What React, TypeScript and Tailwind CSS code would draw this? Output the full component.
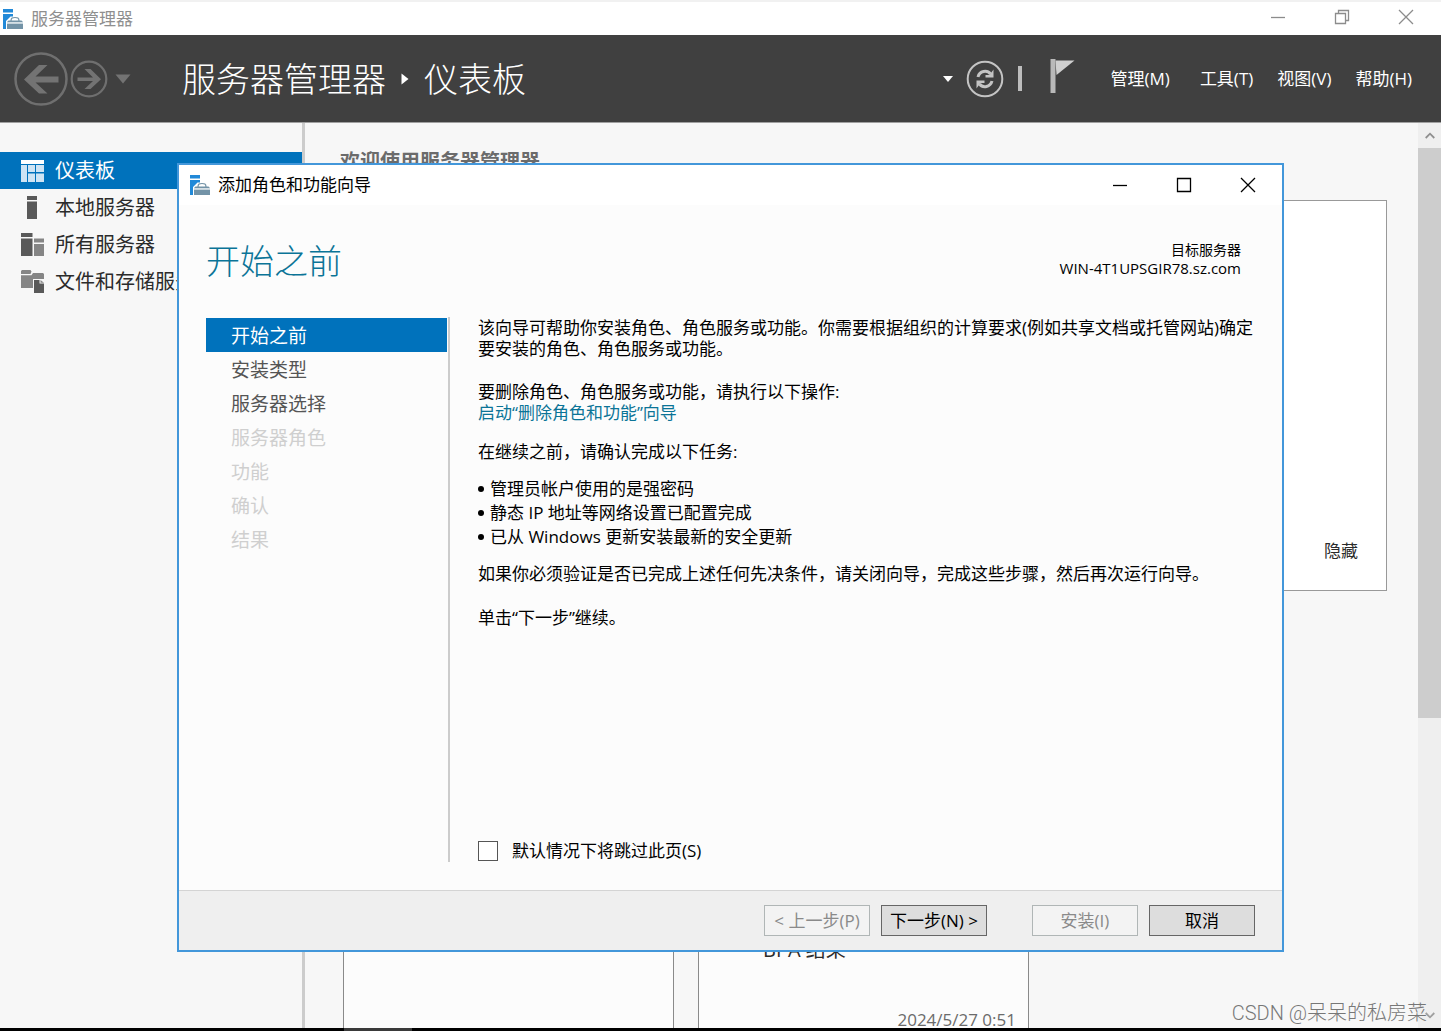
import { ReactNode } from "react";
import clsx from "clsx";

const sidebarItems = [
  { label: "仪表板", icon: <DashboardIcon />, active: true },
  { label: "本地服务器", icon: <ServerIcon />, active: false },
  { label: "所有服务器", icon: <ServersIcon />, active: false },
  { label: "文件和存储服务", icon: <StorageIcon />, active: false },
];

const wizardSteps = [
  { label: "开始之前", state: "current" },
  { label: "安装类型", state: "enabled" },
  { label: "服务器选择", state: "enabled" },
  { label: "服务器角色", state: "disabled" },
  { label: "功能", state: "disabled" },
  { label: "确认", state: "disabled" },
  { label: "结果", state: "disabled" },
];

const stepClasses: Record<string, string> = {
  current: "bg-[#0072bc] text-white",
  enabled: "text-[#555555]",
  disabled: "text-[#cfcfcf]",
};

const tasks = [
  "管理员帐户使用的是强密码",
  "静态 IP 地址等网络设置已配置完成",
  "已从 Windows 更新安装最新的安全更新",
];

const App = () => (
  <div className="relative flex h-screen flex-col overflow-hidden bg-[#f7f7f7] font-['Open_Sans','Noto_Sans_CJK_SC',sans-serif] text-[17px] leading-[22px] text-black">
    <TitleBar />
    <Header />
    <div className="flex min-h-0 flex-1">
      <Sidebar />
      <Dashboard />
      <ScrollBar />
    </div>
    <div className="flex h-[3px] shrink-0 bg-black pl-[344px]">
      <div className="w-17 bg-[#3a3a3a]" />
    </div>
    <Wizard />
    <div className="absolute right-[14px] bottom-1 font-['Roboto','Noto_Sans_CJK_SC',sans-serif] text-[20px] leading-7 font-light text-[#777777]">
      CSDN @呆呆的私房菜
    </div>
  </div>
);

export default App;

const TitleBar = () => (
  <div className="flex h-[35px] shrink-0 items-center border-t-2 border-[#f1f1f1] bg-white pl-[3px] text-[#8f8f8f]">
    <AppLogo />
    <span className="ml-2 flex-1">服务器管理器</span>
    <div className="flex pr-[1px] pb-1 text-[#8c8c8c]">
      <WindowButton label="最小化">
        <path d="M1 8.500h14" />
      </WindowButton>
      <WindowButton label="还原">
        <path d="M1.500 4.500h10v10h-10zM4.500 4.500v-3h10v10h-3" />
      </WindowButton>
      <WindowButton label="关闭">
        <path d="M1 1l14 14M15 1L1 15" />
      </WindowButton>
    </div>
  </div>
);

const WindowButton = ({
  label,
  children,
}: {
  label: string;
  children: ReactNode;
}) => (
  <button
    type="button"
    aria-label={label}
    className="flex h-8 w-16 items-center justify-center pr-1"
  >
    <svg
      className="size-4"
      viewBox="0 0 16 16"
      fill="none"
      stroke="currentColor"
      strokeWidth="1.3"
    >
      {children}
    </svg>
  </button>
);

const Header = () => (
  <header className="flex h-[88px] shrink-0 items-center border-b border-[#a0a0a0] bg-[#404040] pl-[14px] text-white">
    <button type="button" aria-label="后退">
      <svg className="size-[54px]" viewBox="0 0 54 54" fill="none">
        <circle cx="27" cy="27" r="25.500" stroke="#6f6f6f" strokeWidth="2.500" />
        <path
          d="M10 27.500L25 13h8.500L21.500 24.500H44.500v6H21.500L33.500 41.500H25z"
          fill="#737373"
        />
      </svg>
    </button>
    <button type="button" aria-label="前进" className="ml-[2px]">
      <svg className="size-[38px]" viewBox="0 0 38 38" fill="none">
        <circle cx="19" cy="19" r="17.300" stroke="#6f6f6f" strokeWidth="2.200" />
        <path
          d="M31 19.200L20.500 29h-6L23 21H7.500v-3.600H23L14.500 9h6z"
          fill="#737373"
        />
      </svg>
    </button>
    <button type="button" aria-label="历史记录" className="ml-[7px]">
      <svg className="h-[10px] w-4" viewBox="0 0 16 10">
        <path d="M.5.500h15L8 9.500z" fill="#737373" />
      </svg>
    </button>
    <h1 className="ml-[51px] flex flex-1 items-center text-[34px] leading-[48px] font-light">
      服务器管理器
      <svg className="mx-[15px] h-3 w-2" viewBox="0 0 8 12">
        <path d="M.5.500L7.500 6L.5 11.500z" fill="#fff" />
      </svg>
      仪表板
    </h1>
    <button type="button" aria-label="更多">
      <svg className="h-[6px] w-[10px]" viewBox="0 0 10 6">
        <path d="M0 0h10L5 6z" fill="#fff" />
      </svg>
    </button>
    <button type="button" aria-label="刷新" className="ml-[13px]">
      <RefreshIcon />
    </button>
    <div className="ml-[14px] h-[25px] w-[4px] bg-[#bdbdbd]" />
    <button type="button" aria-label="通知" className="ml-7 pb-[6px]">
      <svg className="h-[34px] w-[25px]" viewBox="0 0 25 34">
        <path d="M.5 0h5v34h-5z" fill="#b9b9b9" />
        <path d="M5.500 1.500H24.500L6.500 16z" fill="#d0d0d0" />
      </svg>
    </button>
    <nav className="ml-9 flex gap-6 pr-[29px]">
      <button type="button" className="mr-[6px]">管理(M)</button>
      <button type="button">工具(T)</button>
      <button type="button">视图(V)</button>
      <button type="button">帮助(H)</button>
    </nav>
  </header>
);

const Sidebar = () => (
  <nav className="w-[305px] shrink-0 border-r-[3px] border-[#cccccc] pt-[29px]">
    {sidebarItems.map(({ label, icon, active }) => (
      <a
        key={label}
        href="#"
        className={clsx(
          "flex h-[37px] items-center gap-[11px] pl-[21px] text-[20px]",
          active ? "bg-[#0072bc] text-white" : "text-[#2b2b2b]"
        )}
      >
        {icon}
        {label}
      </a>
    ))}
  </nav>
);

const Dashboard = () => (
  <main className="flex min-w-0 flex-1 flex-col pt-[27px] pr-7 pl-[35px]">
    <h2 className="text-[20px] leading-6 font-bold text-[#6b6b6b]">
      欢迎使用服务器管理器
    </h2>
    <section className="mx-[3px] mt-[26px] flex h-[391px] shrink-0 items-end justify-end border border-[#999999] bg-white px-7 pb-7">
      <button type="button" className="text-[#2b2b2b]">隐藏</button>
    </section>
    <div className="mx-[3px] mt-[330px] flex flex-1 gap-6">
      <div className="w-[331px] border-x border-[#8a8a8a] bg-[#fcfcfc]" />
      <div className="flex w-[331px] flex-col justify-between border-x border-[#8a8a8a] bg-[#fcfcfc] pt-[18px] pr-3">
        <span className="pl-16 text-[20px] text-[#2b2b2b]">BPA 结果</span>
        <span className="text-right leading-4 text-[#6b6b6b]">
          2024/5/27 0:51
        </span>
      </div>
    </div>
  </main>
);

const ScrollBar = () => (
  <div className="flex w-[23px] shrink-0 flex-col bg-[#efefef]">
    <button
      type="button"
      aria-label="向上滚动"
      className="flex h-[25px] items-center justify-center"
    >
      <svg className="h-[7px] w-[10px]" viewBox="0 0 10 7" fill="none">
        <path d="M.7 6L5 1.700L9.300 6" stroke="#8f8f8f" strokeWidth="1.800" />
      </svg>
    </button>
    <div className="h-[63%] bg-[#cdcdcd]" />
    <button
      type="button"
      aria-label="向下滚动"
      className="mt-auto flex h-[25px] items-center justify-center"
    >
      <svg className="h-[7px] w-[10px]" viewBox="0 0 10 7" fill="none">
        <path d="M.7 1L5 5.300L9.300 1" stroke="#9f9f9f" strokeWidth="1.800" />
      </svg>
    </button>
  </div>
);

const Wizard = () => (
  <div
    role="dialog"
    aria-labelledby="wizard-title"
    className="absolute top-[163px] right-[157px] bottom-[79px] left-[177px] flex flex-col border-2 border-[#4397da] bg-[#fcfcfc]"
  >
    <div className="flex h-10 shrink-0 items-center bg-white pl-[11px]">
      <AppLogo />
      <span id="wizard-title" className="ml-2 flex-1">
        添加角色和功能向导
      </span>
      <WindowButton label="最小化">
        <path d="M1 8.500h14" />
      </WindowButton>
      <WindowButton label="最大化">
        <path d="M1.500 1.500h13v13h-13z" />
      </WindowButton>
      <WindowButton label="关闭">
        <path d="M1 1l14 14M15 1L1 15" />
      </WindowButton>
    </div>
    <div className="flex items-start justify-between pt-8 pr-[41px] pl-[27px]">
      <h2 className="text-[34px] leading-[48px] font-light text-[#0b7497]">
        开始之前
      </h2>
      <p className="flex flex-col pt-1 text-right text-[15px] leading-[18px]">
        <span className="text-[14px]">目标服务器</span>
        <span>WIN-4T1UPSGIR78.sz.com</span>
      </p>
    </div>
    <div className="mt-8 mb-7 flex flex-1 pl-[27px]">
      <ol className="w-[244px] shrink-0 border-r-2 border-[#cccccc] pt-[1px] pr-[1px]">
        {wizardSteps.map(({ label, state }) => (
          <li key={label}>
            <button
              type="button"
              disabled={state === "disabled"}
              className={clsx(
                "flex h-[34px] w-full items-center pt-[2px] pl-[25px] text-[19px]",
                stepClasses[state]
              )}
            >
              {label}
            </button>
          </li>
        ))}
      </ol>
      <div className="flex flex-1 flex-col pr-7 pl-7">
        <p className="leading-[21px]">
          该向导可帮助你安装角色、角色服务或功能。你需要根据组织的计算要求(例如共享文档或托管网站)确定要安装的角色、角色服务或功能。
        </p>
        <p className="mt-[22px] leading-[21px]">
          要删除角色、角色服务或功能，请执行以下操作:
          <br />
          <a href="#" className="text-[#0b7497]">
            启动“删除角色和功能”向导
          </a>
        </p>
        <p className="mt-[18px]">在继续之前，请确认完成以下任务:</p>
        <ul className="mt-[14px]">
          {tasks.map((task) => (
            <li key={task} className="flex items-center gap-[6px] leading-6">
              <span className="size-[6px] rounded-full bg-black" />
              {task}
            </li>
          ))}
        </ul>
        <p className="mt-[14px]">
          如果你必须验证是否已完成上述任何先决条件，请关闭向导，完成这些步骤，然后再次运行向导。
        </p>
        <p className="mt-[22px]">单击“下一步”继续。</p>
        <label className="mt-auto flex items-center gap-[14px]">
          <input
            type="checkbox"
            className="size-5 appearance-none border border-[#555555] bg-white"
          />
          默认情况下将跳过此页(S)
        </label>
      </div>
    </div>
    <div className="flex h-[60px] shrink-0 items-center justify-end border-t border-[#d4d4d4] bg-[#efefef] pr-[27px]">
      <WizardButton disabled>&lt; 上一步(P)</WizardButton>
      <WizardButton className="ml-[11px]">下一步(N) &gt;</WizardButton>
      <WizardButton disabled className="ml-[45px]">
        安装(I)
      </WizardButton>
      <WizardButton className="ml-[11px]">取消</WizardButton>
    </div>
  </div>
);

const WizardButton = ({
  disabled,
  className,
  children,
}: {
  disabled?: boolean;
  className?: string;
  children: ReactNode;
}) => (
  <button
    type="button"
    disabled={disabled}
    className={clsx(
      "h-[31px] w-[106px] border text-center whitespace-nowrap",
      disabled
        ? "border-[#b0b6b6] bg-[#f3f3f3] text-[#8a8a8a]"
        : "border-[#666666] bg-[#dddddd]",
      className
    )}
  >
    {children}
  </button>
);

function AppLogo() {
  return (
    <svg className="size-5" viewBox="0 0 20 20">
      <path d="M0 0h10v3.500H0zM0 5h10v2.500H7.500L3 12v8H0z" fill="#2189d8" />
      <path
        d="M8 12c0-3.500 1.500-3.500 4-3.500s4 0 4 3.500"
        stroke="#7393a7"
        strokeWidth="1.200"
        fill="none"
      />
      <path d="M5.500 11.500h13L20 13H4zM4 14.500h16V20H4z" fill="#7393a7" />
      <path d="M4 13h16v1.500H4z" fill="#d5dfe5" />
    </svg>
  );
}

function RefreshIcon() {
  return (
    <svg className="size-[38px]" viewBox="0 0 38 38" fill="none">
      <circle cx="19" cy="19" r="17.300" stroke="#c4c4c4" strokeWidth="2" />
      <path
        d="M12 17c1.500-6 9-7.500 12.500-3M26 21c-1.500 6-9 7.500-12.500 3"
        stroke="#c4c4c4"
        strokeWidth="3"
      />
      <path
        d="M27.500 9.500v8H19.500v-2.500h4zM10.500 28.500v-8h8v2.500h-4z"
        fill="#c4c4c4"
      />
    </svg>
  );
}

function DashboardIcon() {
  return (
    <svg className="h-[22px] w-[23px]" viewBox="0 0 23 22">
      <path d="M0 0h23v4H0z" fill="#fff" />
      <path
        d="M0 5h6v17H0zM7 5h7v7H7zM15 5h8v7h-8zM7 13.500h7V22H7zM15 13.500h8V22h-8z"
        fill="#cfe4f4"
      />
    </svg>
  );
}

function ServerIcon() {
  return (
    <svg className="h-[23px] w-[23px]" viewBox="0 0 23 23">
      <path d="M6 0h10v4H6zM6 5.500h10V23H6z" fill="#595959" />
    </svg>
  );
}

function ServersIcon() {
  return (
    <svg className="h-[23px] w-[23px]" viewBox="0 0 23 23">
      <path d="M0 0h11.500v4H0zM0 5.500h11.500V23H0z" fill="#595959" />
      <path d="M13 5.500h10v4H13zM13 11h10v12H13z" fill="#858585" />
    </svg>
  );
}

function StorageIcon() {
  return (
    <svg className="h-[23px] w-[23px]" viewBox="0 0 23 23">
      <path
        d="M1 0h8.500l1 1.500L9.500 4H0V1zM12 3h10l1 1v5H12v9H0V5.200h10.500z"
        fill="#858585"
      />
      <path d="M13 10h5.500v3.500H23V23H13z" fill="#595959" />
      <path d="M19.500 10L23 12.700h-3.500z" fill="#858585" />
    </svg>
  );
}
